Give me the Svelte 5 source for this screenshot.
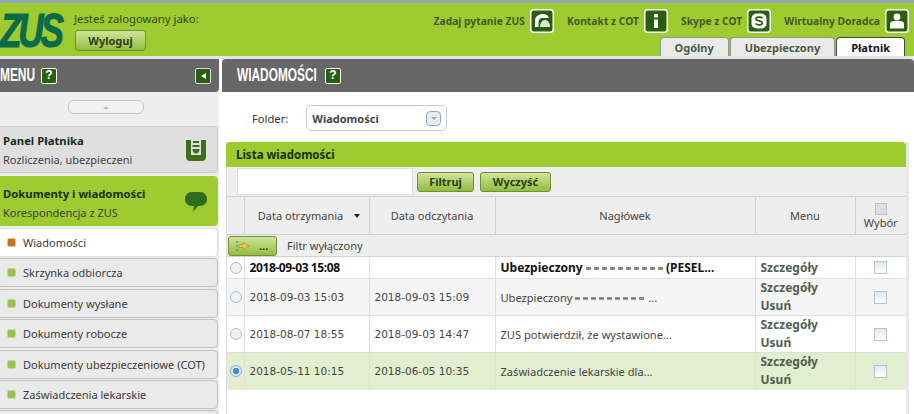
<script lang="ts">
  const links = [
    { label: 'Zadaj pytanie ZUS', icon: 'helmet' },
    { label: 'Kontakt z COT', icon: 'info' },
    { label: 'Skype z COT', icon: 'skype' },
    { label: 'Wirtualny Doradca', icon: 'person' }
  ];
  const tabs = ['Ogólny', 'Ubezpieczony', 'Płatnik'];
  const items = [
    'Skrzynka odbiorcza',
    'Dokumenty wysłane',
    'Dokumenty robocze',
    'Dokumenty ubezpieczeniowe (COT)',
    'Zaświadczenia lekarskie',
    ''
  ];
  const rows = [
    { got: '2018-09-03 15:08', read: '', head: 'Ubezpieczony', mask: 77, tail: '(PESEL...', bold: true, del: false },
    { got: '2018-09-03 15:03', read: '2018-09-03 15:09', head: 'Ubezpieczony', mask: 70, tail: '...', del: true, alt: true },
    { got: '2018-08-07 18:55', read: '2018-09-03 14:47', head: 'ZUS potwierdził, że wystawione...', del: true },
    { got: '2018-05-11 10:15', read: '2018-06-05 10:35', head: 'Zaświadczenie lekarskie dla...', del: true, picked: true }
  ];
</script>

<div class="page">
  <header class="top">
    <div class="logo"><span>ZUS</span></div>
    <div class="user">
      <span>Jesteś zalogowany jako:</span>
      <button class="btn logout">Wyloguj</button>
    </div>
    <div class="right">
      <div class="links">
        {#each links as link}
          <div class="link">
            <span>{link.label}</span>
            <svg class="ico" viewBox="0 0 24 24">
              <rect x="0.75" y="0.75" width="22.5" height="22.5" rx="3" fill="#2b5f10" stroke="#fff" stroke-width="1.5" />
              {#if link.icon === 'helmet'}
                <path d="M5 18 V12 C5 7 9 5 13 5 C16 5 18 6.5 19 9 L12 9 C9.5 9 8.5 11 8.5 14 V18 Z" fill="#fff" />
                <path d="M10 18 C10 14 12 11 15 11 C18 11 20 14 20 18 Z" fill="#dfe8d8" />
              {:else if link.icon === 'info'}
                <rect x="10" y="5" width="4" height="3.5" fill="#fff" />
                <rect x="10" y="10.5" width="4" height="8.5" fill="#fff" />
              {:else if link.icon === 'skype'}
                <rect x="4.5" y="4.5" width="15" height="15" rx="5" fill="#fff" />
                <path d="M15.5 9.2 C14.5 7.8 9 7.6 9 10 C9 12.6 15.3 11.3 15.3 14 C15.3 16.4 10 16.4 8.6 14.6" fill="none" stroke="#2b5f10" stroke-width="1.7" />
              {:else}
                <circle cx="12" cy="8" r="3.4" fill="#fff" />
                <path d="M5 19.5 V15 C5 12.8 7 12 9 12 H15 C17 12 19 12.8 19 15 V19.5 Z" fill="#fff" />
              {/if}
            </svg>
          </div>
        {/each}
      </div>
      <nav class="tabs">
        {#each tabs as tab, i}
          <div class="tab" class:active={i === 2}>{tab}</div>
        {/each}
      </nav>
    </div>
  </header>

  <div class="body">
    <aside class="side">
      <div class="bar side-bar">
        <span class="title menu-title">MENU</span>
        <span class="help">?</span>
        <span class="collapse"><i></i></span>
      </div>
      <div class="up-wrap"><div class="up"><i></i></div></div>
      <div class="panel">
        <div>
          <strong>Panel Płatnika</strong>
          <span>Rozliczenia, ubezpieczeni</span>
        </div>
        <svg class="panel-ico" viewBox="0 0 22 24">
          <path d="M1 2 H6 V17 H16 V2 H21 V19 C21 22 19 23 17 23 H5 C3 23 1 22 1 19 Z" fill="#3c6e1e" />
          <path d="M8 3 H14 V5 H8 Z M7.5 7 H14.5 V9 H7.5 Z M7.5 11 H14.5 C14.5 14 13 15.5 11 15.5 C9 15.5 7.5 14 7.5 11 Z" fill="#3c6e1e" />
        </svg>
      </div>
      <div class="panel on">
        <div>
          <strong>Dokumenty i wiadomości</strong>
          <span>Korespondencja z ZUS</span>
        </div>
        <svg class="panel-ico" viewBox="0 0 22 24">
          <path d="M7 1 H15 C19 1 22 4 22 8 C22 12 19 15 15 15 H13 L8 21 L9 15 H7 C3 15 0 12 0 8 C0 4 3 1 7 1 Z" fill="#2f6a1f" />
        </svg>
      </div>
      <div class="item current"><i></i>Wiadomości</div>
      {#each items as item}
        <div class="item">
          {#if item}<i></i>{item}{/if}
        </div>
      {/each}
    </aside>

    <main class="main">
      <div class="bar main-bar">
        <span class="title main-title">WIADOMOŚCI</span>
        <span class="help">?</span>
      </div>
      <div class="content">
        <div class="folder">
          <label for="folder">Folder:</label>
          <div class="select" id="folder">
            <b>Wiadomości</b>
            <span class="drop"><i></i></span>
          </div>
        </div>

        <section class="list">
          <h2>Lista wiadomości</h2>
          <div class="filter">
            <input type="text" />
            <button class="btn filtruj">Filtruj</button>
            <button class="btn wyczysc">Wyczyść</button>
          </div>
          <table>
            <colgroup>
              <col style="width: 17px" />
              <col style="width: 125px" />
              <col style="width: 126px" />
              <col style="width: 260px" />
              <col style="width: 100px" />
              <col />
            </colgroup>
            <thead>
              <tr class="heads">
                <th></th>
                <th class="sorted">Data otrzymania<i></i></th>
                <th>Data odczytania</th>
                <th>Nagłówek</th>
                <th>Menu</th>
                <th class="pick"><span class="box small"></span>Wybór</th>
              </tr>
              <tr class="state">
                <td colspan="6">
                  <div class="state-in">
                    <button class="btn dots">
                      <svg viewBox="0 0 14 10" width="14" height="10">
                        <path d="M7 1.5 L13 5 L7 8.5 V6.5 H3 V3.5 H7 Z" fill="#f0c63c" stroke="#a8862a" stroke-width="0.6" />
                        <path d="M0 1 H2.5 M0 5 H2 M0 9 H2.5" stroke="#666" stroke-width="1" />
                      </svg>
                      <span>...</span>
                    </button>
                    <span>Filtr wyłączony</span>
                  </div>
                </td>
              </tr>
            </thead>
            <tbody>
              {#each rows as row}
                <tr class:alt={row.alt} class:picked={row.picked} class:bold={row.bold}>
                  <td class="radio"><span class="dot"></span></td>
                  <td class="date">{row.got}</td>
                  <td class="date">{row.read}</td>
                  <td>
                    {row.head}
                    {#if row.mask}<span class="mask" style="width: {row.mask}px"></span>{/if}
                    {#if row.tail}{row.tail}{/if}
                  </td>
                  <td class="menu">
                    <a href="#top">Szczegóły</a>
                    {#if row.del}<a href="#top">Usuń</a>{/if}
                  </td>
                  <td class="pick"><span class="box"></span></td>
                </tr>
              {/each}
            </tbody>
          </table>
        </section>
      </div>
    </main>
  </div>
</div>

<style>
  :global(body) {
    background: #fff;
  }

  .page {
    width: 914px;
    height: 414px;
    overflow: hidden;
    font-family: "Noto Sans", "Liberation Sans", sans-serif;
    font-size: 11px;
    color: #333;
    background: #fff;
  }

  /* Top green header */
  .top {
    display: flex;
    height: 53px;
    border-top: 3px solid #97a5b3;
    border-bottom: 3px solid #e6e6e6;
    background: #9ecb2f;
  }

  .logo {
    width: 66px;
    flex: none;
    font-family: "Liberation Sans", sans-serif;
    font-size: 44px;
    font-weight: 700;
    font-style: italic;
    line-height: 53px;
    letter-spacing: -4px;
    color: #0b6a4a;
    -webkit-text-stroke: 1px #0b6a4a;
  }

  .logo span {
    display: inline-block;
    transform: scale(0.8, 1.1);
    transform-origin: left center;
  }

  .user {
    display: flex;
    flex-direction: column;
    align-items: flex-start;
    gap: 4px;
    padding-top: 8px;
    margin-left: 8px;
    font-size: 11.3px;
    color: #33480f;
  }

  .btn {
    padding: 0;
    border: 1px solid #6f8f3b;
    border-radius: 3px;
    background: linear-gradient(#cfe59a, #93bd3e);
    font: 700 11px "Noto Sans", sans-serif;
    color: #2c3c1c;
  }

  .logout {
    width: 71px;
    height: 21px;
    margin-left: 1px;
  }

  .right {
    flex: 1;
    display: flex;
    flex-direction: column;
    align-items: flex-end;
  }

  .links {
    display: flex;
    gap: 13px;
    height: 34px;
    padding: 6px 5px 0 0;
    box-sizing: border-box;
  }

  .link {
    display: flex;
    align-items: center;
    gap: 5px;
    height: 24px;
    font-weight: 700;
    font-size: 10.3px;
    color: #44592a;
  }

  .ico {
    width: 24px;
    height: 24px;
  }

  .tabs {
    display: flex;
    gap: 1px;
    padding-right: 9px;
    height: 19px;
  }

  .tab {
    padding: 0 14px;
    border: 1px solid #8b9a80;
    border-bottom: 0;
    border-radius: 4px 4px 0 0;
    background: #eaeaea;
    font-weight: 700;
    line-height: 19px;
    color: #4b5a44;
  }

  .tab.active {
    border-color: #3c4b33;
    background: #fff;
    color: #111;
  }

  /* Two columns */
  .body {
    display: flex;
    gap: 3px;
  }

  .side {
    width: 219px;
    flex: none;
    background: #eee;
  }

  .main {
    flex: 1;
  }

  .bar {
    display: flex;
    align-items: center;
    height: 33px;
    background: #676767;
    color: #fff;
  }

  .side-bar {
    border-radius: 0 0 4px 0;
  }

  .main-bar {
    padding-left: 15px;
    border-radius: 4px 4px 0 0;
  }

  .title {
    display: inline-block;
    font-family: "Liberation Sans", sans-serif;
    font-size: 18px;
    font-weight: 700;
    white-space: nowrap;
    transform: scaleX(0.66);
    transform-origin: left;
  }

  .menu-title {
    width: 34px;
  }

  .main-title {
    width: 81px;
  }

  .help {
    box-sizing: border-box;
    width: 16px;
    height: 16px;
    margin-left: 7px;
    border: 1.5px solid #fff;
    border-radius: 2px;
    background: #2b5f10;
    font: 700 12px/13px "Liberation Sans", sans-serif;
    text-align: center;
  }

  .collapse {
    box-sizing: border-box;
    display: flex;
    align-items: center;
    justify-content: center;
    width: 16px;
    height: 16px;
    margin-left: auto;
    margin-right: 8px;
    border: 1.5px solid #ddd;
    border-radius: 2px;
    background: #2b5f10;
  }

  .collapse i {
    border-top: 3.5px solid transparent;
    border-bottom: 3.5px solid transparent;
    border-right: 5px solid #fff;
  }

  .up-wrap {
    display: flex;
    justify-content: center;
    height: 34px;
    padding: 8px 0 0;
    box-sizing: border-box;
  }

  .up {
    display: flex;
    align-items: center;
    justify-content: center;
    box-sizing: border-box;
    width: 76px;
    height: 14px;
    margin-right: 8px;
    border: 1px solid #c6c6c6;
    border-radius: 6px;
    background: #f2f2f2;
  }

  .up i {
    border-left: 3px solid transparent;
    border-right: 3px solid transparent;
    border-bottom: 3px solid #bbb;
  }

  .panel {
    display: flex;
    align-items: center;
    justify-content: space-between;
    box-sizing: border-box;
    height: 47px;
    margin: 0 1px 3px -3px;
    padding: 0 10px 0 5px;
    border: 1px solid #ccc;
    border-radius: 4px;
    background: #dfdfdf;
  }

  .panel.on {
    height: 50px;
    margin-bottom: 2px;
    padding-top: 3px;
    border-color: #9ecb2f;
    background: #9ecb2f;
  }

  .panel strong {
    display: block;
    font-size: 11.3px;
    line-height: 20px;
    color: #14301c;
  }

  .panel span {
    display: block;
    font-size: 11px;
    line-height: 18px;
    color: #3f3f3f;
  }

  .panel-ico {
    width: 22px;
    height: 24px;
    flex: none;
  }

  .item {
    display: flex;
    align-items: center;
    box-sizing: border-box;
    height: 29px;
    margin: 0 1px 1.4px -3px;
    padding-left: 10px;
    border: 1px solid #bfbfbf;
    border-radius: 4px;
    background: #eaeaea;
    white-space: nowrap;
    color: #3a3a3a;
  }

  .item i {
    width: 7px;
    height: 7px;
    margin-right: 8px;
    border-radius: 1px;
    background: #9ac24a;
    box-shadow: 0 0 0 1px #c3d6a0;
  }

  .item.current {
    background: #fff;
    border-color: #ddd;
  }

  .item.current i {
    background: #c9701f;
    box-shadow: 0 0 0 1px #e8c096;
  }

  /* Content */
  .content {
    height: 322px;
    padding: 0 5px 0 4px;
    box-sizing: border-box;
  }

  .folder {
    display: flex;
    align-items: center;
    gap: 18px;
    height: 48px;
    padding: 2px 0 0 26px;
    font-size: 11.2px;
  }

  .select {
    display: flex;
    align-items: center;
    justify-content: space-between;
    box-sizing: border-box;
    width: 141px;
    height: 26px;
    padding: 0 5px;
    border: 1px solid #c5cdd6;
    border-radius: 5px;
    font-size: 11px;
    color: #444;
  }

  .drop {
    display: flex;
    align-items: center;
    justify-content: center;
    box-sizing: border-box;
    width: 15px;
    height: 15px;
    border: 1px solid #9aa5b0;
    border-radius: 4px;
    background: #e8ecf0;
  }

  .drop i {
    border-left: 3px solid transparent;
    border-right: 3px solid transparent;
    border-top: 3px solid #8fa3b5;
  }

  .list {
    height: 272px;
    border-left: 1px solid #ddd;
    border-right: 3px solid #e8e8e8;
  }

  h2 {
    margin: 0 0 0 -1px;
    height: 25px;
    padding-left: 10px;
    border-radius: 4px 4px 0 0;
    background: #9ecb2f;
    font-size: 11.5px;
    line-height: 25px;
    color: #14301c;
  }

  .filter {
    display: flex;
    align-items: center;
    height: 29px;
    padding-left: 10px;
    background: #eee;
  }

  .filter input {
    box-sizing: border-box;
    width: 176px;
    height: 27px;
    margin-right: 4px;
    border: 1px solid #ddd;
    background: #fff;
  }

  .filtruj {
    width: 57px;
    height: 20px;
    margin-right: 6px;
  }

  .wyczysc {
    width: 71px;
    height: 20px;
  }

  table {
    width: 100%;
    border-collapse: collapse;
    table-layout: fixed;
  }

  th {
    height: 34px;
    padding: 0;
    border: 1px solid #d2d2d2;
    border-width: 1px 1px 1px 0;
    background: #eee;
    font-weight: 400;
    color: #444;
  }

  th.sorted {
    padding-left: 5px;
  }

  .sorted i {
    display: inline-block;
    margin-left: 11px;
    vertical-align: 2px;
    border-left: 3.5px solid transparent;
    border-right: 3.5px solid transparent;
    border-top: 4px solid #222;
  }

  .heads .pick {
    line-height: 16px;
    padding-top: 3px;
  }

  .state td {
    height: 21px;
    padding: 0;
    border-bottom: 1px solid #d2d2d2;
    background: #eee;
  }

  .state-in {
    display: flex;
    align-items: center;
    gap: 10px;
    color: #444;
  }

  .dots {
    display: flex;
    align-items: center;
    gap: 9px;
    box-sizing: border-box;
    width: 49px;
    height: 20px;
    margin-left: 1px;
    padding-left: 7px;
  }

  tbody td {
    height: 36px;
    padding: 0 0 0 5px;
    border-right: 1px solid #e6ded6;
    border-bottom: 1px solid #e6ded6;
    font-size: 11.1px;
    color: #444;
    white-space: nowrap;
  }

  tbody .bold td {
    height: 21px;
    font-size: 12px;
    font-weight: 700;
    color: #111;
  }

  tbody .date {
    font-family: "DejaVu Sans", sans-serif;
    font-size: 10.5px;
  }

  tbody .bold .date {
    font-family: "Noto Sans", sans-serif;
    font-size: 12px;
    letter-spacing: -0.4px;
  }

  tbody .alt td {
    background: #f5f5f5;
  }

  tbody .picked td {
    background: #e2eed0;
    border-bottom-color: #e2eed0;
  }

  tbody td.radio {
    padding-left: 3px;
  }

  .dot {
    display: block;
    box-sizing: border-box;
    width: 12px;
    height: 12px;
    border: 1px solid #b5bec6;
    border-radius: 50%;
    background: #eef2f5;
  }

  .picked .dot {
    background: radial-gradient(#3f8fd2 45%, #dce8f2 50%);
    border-color: #8fb0cc;
  }

  .mask {
    display: inline-block;
    height: 3px;
    vertical-align: 2px;
    background: repeating-linear-gradient(90deg, #888 0 5px, #fff 5px 8px);
  }

  .menu a {
    display: block;
    font-size: 12px;
    font-weight: 700;
    line-height: 18px;
    text-decoration: none;
    color: #50604a;
  }

  .pick {
    padding: 0;
    text-align: center;
    border-right: 0;
  }

  tbody td.pick {
    padding: 0;
    border-right: 0;
  }

  .box {
    display: block;
    box-sizing: border-box;
    width: 13px;
    height: 13px;
    margin: 0 auto;
    border: 1px solid #b9c2ca;
    background: linear-gradient(#dfe7ee, #fff);
  }

  .box.small {
    width: 12px;
    height: 12px;
    background: #ddd;
  }
</style>
